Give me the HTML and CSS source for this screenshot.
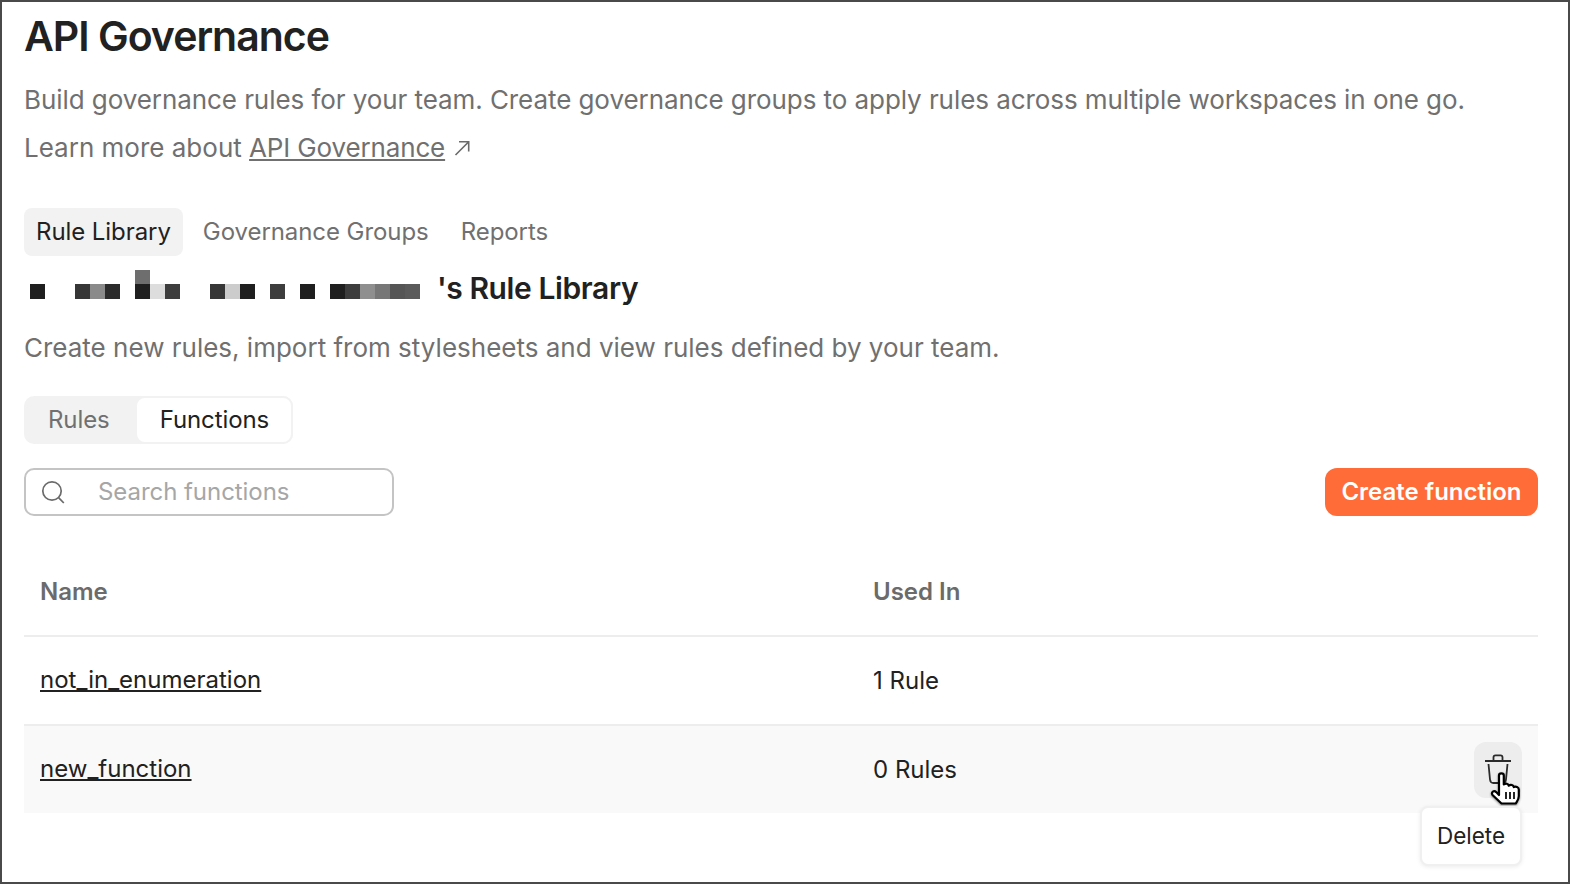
FILE: index.html
```html
<!DOCTYPE html>
<html lang="en">
<head>
<meta charset="utf-8">
<title>API Governance</title>
<link rel="stylesheet" href="styles.css">
</head>
<body>
<div class="frame">
  <h1 class="title">API Governance</h1>
  <p class="lead intro">Build governance rules for your team. Create governance groups to apply rules across multiple workspaces in one go.</p>
  <p class="lead learn">Learn more about <a class="lead-link" href="#">API Governance</a>
    <svg class="arrow" width="18" height="18" viewBox="0 0 18 18" fill="none" stroke="#6b6b6b" stroke-width="1.6"><path d="M2.500 16 15.500 3M6 2.800h9.700v9.700"/></svg>
  </p>
  <nav class="tabs">
    <span class="tab tab-active">Rule Library</span>
    <span class="tab">Governance Groups</span>
    <span class="tab">Reports</span>
  </nav>
  <h2 class="library">
    <span class="mosaic" aria-hidden="true">
      <i class="c c-top"></i>
      <i class="c g1 a1"></i><i class="c g3 a2"></i><i class="c g4 a3"></i><i class="c g5 a4"></i>
      <i class="c g7 a1"></i><i class="c g8 a5"></i><i class="c g9 a6"></i>
      <i class="c g11 a2"></i><i class="c g12 a7"></i><i class="c g13 a1"></i>
      <i class="c g15 a6"></i><i class="c g17 a1"></i>
      <i class="c g19 a1"></i><i class="c g20 a6"></i><i class="c g21 a8"></i><i class="c g22 a9"></i><i class="c g23 a10"></i><i class="c g24 a11"></i>
    </span>
    <span>'s Rule Library</span>
  </h2>
  <p class="lead sub">Create new rules, import from stylesheets and view rules defined by your team.</p>
  <div class="segment">
    <span class="seg seg-first">Rules</span>
    <span class="seg seg-active">Functions</span>
  </div>
  <div class="toolbar">
    <label class="search">
      <svg class="search-icon" width="26" height="26" viewBox="0 0 26 26" fill="none" stroke="#6b6b6b" stroke-width="1.7"><circle cx="12" cy="12" r="9.200"/><path d="m18.600 18.600 5.200 5.400"/></svg>
      <span class="placeholder">Search functions</span>
    </label>
    <button class="create">Create function</button>
  </div>
  <div class="table">
    <div class="row head"><span class="col-name">Name</span><span>Used In</span></div>
    <div class="row row-first"><a class="col-name fn" href="#">not_in_enumeration</a><span>1 Rule</span></div>
    <div class="row row-hover">
      <a class="col-name fn" href="#">new_function</a><span>0 Rules</span>
      <span class="trash">
        <svg width="48" height="56" viewBox="0 0 48 56" fill="none" stroke="#2b2b2b" stroke-width="1.800"><path d="M11 19h26M19.500 18.500v-3.200q0-2 2-2h5q2 0 2 2v3.200"/><path d="M14.500 22 16 37.500q.4 3.500 3.400 3.500h9.200q3 0 3.400-3.500L33.500 22"/></svg>
      </span>
      <svg class="hand" width="34" height="38" viewBox="0 0 34 38"><path d="M10 3.500c0-2.800 4.800-2.800 4.800 0v9c1.800-1.500 4.600-1 5 1.200 1.800-1.400 4.600-.8 5 1.400 1.900-1.100 5-.1 5 2.400v6.500c0 3.500-1.500 5-3 7.500H12.500L3.500 23c-1.700-2.800 1.500-5 3.700-2.900l2.800 2.900z" fill="#fff" stroke="#000" stroke-width="2.200" stroke-linejoin="round"/><path d="M17 20v7M21 20v7M25 20v7" stroke="#000" stroke-width="1.700"/></svg>
      <span class="tooltip">Delete</span>
    </div>
  </div>
</div>
</body>
</html>
```
FILE: styles.css
```css
* { box-sizing: border-box; }
html, body { margin: 0; padding: 0; }
body { width: 1570px; height: 884px; overflow: hidden; background: #fff; font-family: Inter, "Liberation Sans", sans-serif; color: #212121; }
.frame { width: 1570px; height: 884px; border: 2px solid #4a4a4a; padding: 0 30px 0 22px; }
.title { margin: 9px 0 0; font-size: 41px; line-height: 50px; font-weight: 600; letter-spacing: -1px; }
.lead { margin: 0; font-size: 26px; line-height: 48px; color: #707070; }
.intro { margin-top: 15px; letter-spacing: -0.07px; }
.learn { display: flex; align-items: center; white-space: pre; }
.lead-link { color: #707070; letter-spacing: -0.15px; }
.arrow { margin-left: 8px; }
.tabs { display: flex; gap: 8px; margin-top: 36px; }
.tab { height: 48px; padding: 0 12px; font-size: 24px; line-height: 48px; color: #707070; border-radius: 8px; letter-spacing: -0.07px; }
.tab-active { background: #f2f2f2; color: #212121; }
.library { display: flex; align-items: center; margin: 0; height: 64px; font-size: 30px; font-weight: 600; letter-spacing: -0.4px; }
.mosaic { display: grid; grid-template-columns: repeat(26, 15px); grid-template-rows: 14px 15px; margin: -8px 17px 0 6px; }
.c { display: block; grid-row: 2; }
.c-top { grid-row: 1; grid-column: 8; background: #6e6e6e; }
.g1 { grid-column: 1; } .g3 { grid-column: 4; } .g4 { grid-column: 5; } .g5 { grid-column: 6; }
.g7 { grid-column: 8; } .g8 { grid-column: 9; } .g9 { grid-column: 10; }
.g11 { grid-column: 13; } .g12 { grid-column: 14; } .g13 { grid-column: 15; }
.g15 { grid-column: 17; } .g17 { grid-column: 19; }
.g19 { grid-column: 21; } .g20 { grid-column: 22; } .g21 { grid-column: 23; } .g22 { grid-column: 24; } .g23 { grid-column: 25; } .g24 { grid-column: 26; }
.a1 { background: #1f1f1f; } .a2 { background: #363636; } .a3 { background: #8a8a8a; } .a4 { background: #2b2b2b; }
.a5 { background: #ddd; } .a6 { background: #3d3d3d; } .a7 { background: #ccc; } .a8 { background: #8f8f8f; }
.a9 { background: #777; } .a10 { background: #555; } .a11 { background: #5a5a5a; }
.sub { margin-top: 4px; }
.segment { display: flex; width: 269px; height: 48px; margin-top: 24px; background: #f2f2f2; border-radius: 10px; }
.seg { font-size: 24px; line-height: 48px; color: #707070; letter-spacing: -0.1px; }
.seg-first { padding: 0 25px 0 24px; }
.seg-active { flex: 1; padding: 0 19px 0 23px; background: #fff; color: #212121; border: 2px solid #f2f2f2; border-radius: 10px; line-height: 44px; }
.toolbar { display: flex; justify-content: space-between; margin-top: 24px; }
.search { display: flex; align-items: center; width: 370px; height: 48px; border: 2px solid #c4c4c4; border-radius: 10px; padding-left: 14px; }
.search-icon { flex: none; }
.placeholder { margin: 0 0 2px 32px; font-size: 24px; color: #a6a6a6; letter-spacing: -0.05px; }
.create { width: 213px; height: 48px; border: 0; border-radius: 12px; background: #ff6c37; color: #fff; font: 600 24px Inter, "Liberation Sans", sans-serif; padding: 0 0 2px; }
.table { margin-top: 32px; }
.row { position: relative; display: flex; align-items: center; height: 88px; font-size: 24px; border-top: 2px solid #ededed; }
.col-name { width: 833px; margin-left: 16px; flex: none; }
.head { border-top: 0; height: 87px; font-weight: 600; color: #6b6b6b; }
.fn { color: #212121; margin-bottom: 2px; }
.row-first { height: 89px; }
.row-hover { background: #f9f9f9; height: 89px; padding-bottom: 1px; }
.trash { position: absolute; right: 16px; top: 16px; width: 48px; height: 56px; border-radius: 12px; background: #ededed; }
.trash svg { display: block; }
.hand { position: absolute; right: 15px; top: 46px; filter: drop-shadow(0 1px 1px rgba(0,0,0,.45)); }
.tooltip { position: absolute; right: 16px; top: 80px; width: 102px; height: 60px; line-height: 56px; font-size: 22.5px; text-align: center; background: #fff; border: 2px solid #f0f0f0; border-radius: 8px; box-shadow: 0 1px 4px rgba(0,0,0,.08); }
```
